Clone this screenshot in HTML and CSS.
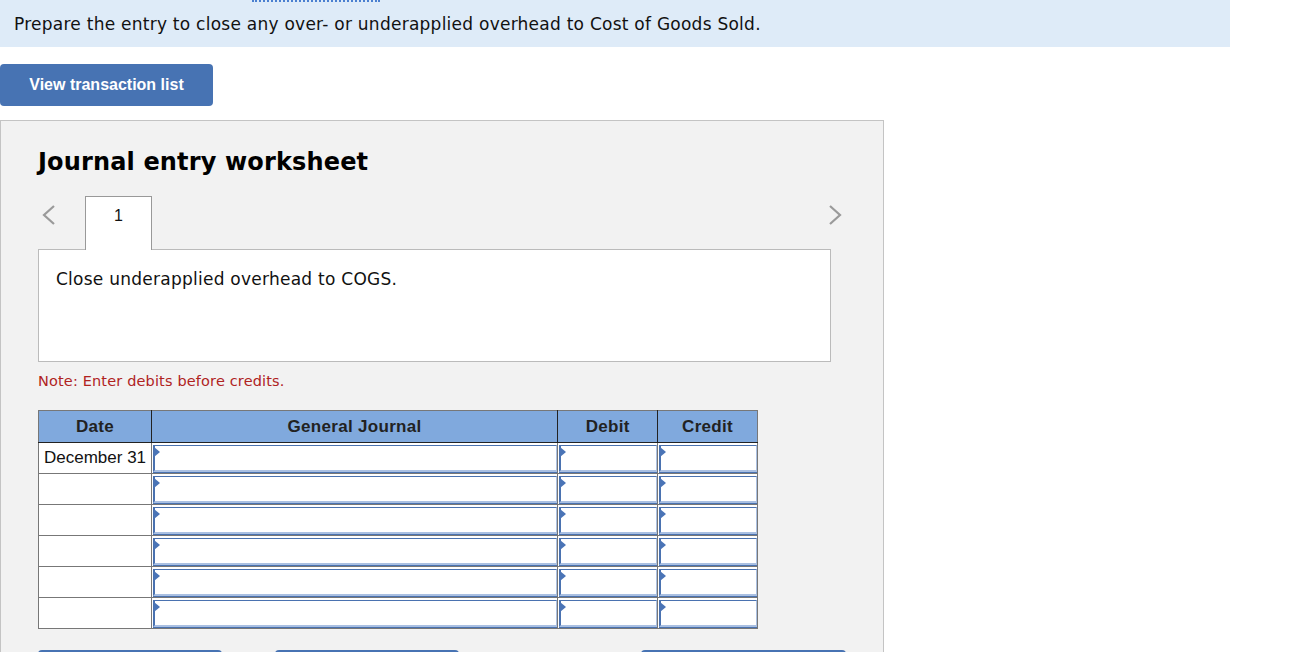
FILE: index.html
```html
<!DOCTYPE html>
<html lang="en">
<head>
    <meta charset="UTF-8">
    <title>Journal entry worksheet</title>
    <link rel="stylesheet" href="styles.css">
</head>
<body>
    <div class="prompt">
        <div class="prompt-mark"></div>
        <p>Prepare the entry to close any over- or underapplied overhead to Cost of Goods Sold.</p>
    </div>

    <button class="btn btn-list" type="button">View transaction list</button>

    <div class="worksheet">
        <h2>Journal entry worksheet</h2>

        <div class="tabs">
            <svg class="chevron" width="14" height="22" viewBox="0 0 14 22"><polyline points="12,2 2,11 12,20" fill="none" stroke="#9a9a9a" stroke-width="2.2"/></svg>
            <div class="tab">1</div>
            <div class="tabs-fill"></div>
            <svg class="chevron" width="14" height="22" viewBox="0 0 14 22"><polyline points="2,2 12,11 2,20" fill="none" stroke="#9a9a9a" stroke-width="2.2"/></svg>
        </div>

        <div class="task">Close underapplied overhead to COGS.</div>

        <p class="note">Note: Enter debits before credits.</p>

        <table class="journal">
            <thead>
                <tr>
                    <th class="col-date">Date</th>
                    <th class="col-account">General Journal</th>
                    <th class="col-amount">Debit</th>
                    <th class="col-amount">Credit</th>
                </tr>
            </thead>
            <tbody>
                <tr>
                    <td class="date">December 31</td>
                    <td class="entry"><div class="field"></div></td>
                    <td class="entry"><div class="field"></div></td>
                    <td class="entry"><div class="field"></div></td>
                </tr>
                <tr>
                    <td class="date"></td>
                    <td class="entry"><div class="field"></div></td>
                    <td class="entry"><div class="field"></div></td>
                    <td class="entry"><div class="field"></div></td>
                </tr>
                <tr>
                    <td class="date"></td>
                    <td class="entry"><div class="field"></div></td>
                    <td class="entry"><div class="field"></div></td>
                    <td class="entry"><div class="field"></div></td>
                </tr>
                <tr>
                    <td class="date"></td>
                    <td class="entry"><div class="field"></div></td>
                    <td class="entry"><div class="field"></div></td>
                    <td class="entry"><div class="field"></div></td>
                </tr>
                <tr>
                    <td class="date"></td>
                    <td class="entry"><div class="field"></div></td>
                    <td class="entry"><div class="field"></div></td>
                    <td class="entry"><div class="field"></div></td>
                </tr>
                <tr>
                    <td class="date"></td>
                    <td class="entry"><div class="field"></div></td>
                    <td class="entry"><div class="field"></div></td>
                    <td class="entry"><div class="field"></div></td>
                </tr>
            </tbody>
        </table>

        <div class="actions">
            <button class="btn btn-action" type="button">Record entry</button>
            <button class="btn btn-action" type="button">Clear entry</button>
            <div class="actions-fill"></div>
            <button class="btn btn-action btn-wide" type="button">View general journal</button>
        </div>
    </div>
</body>
</html>
```

FILE: styles.css
```css
body {
    margin: 0;
    font-family: "DejaVu Sans", Verdana, sans-serif;
    color: #111;
    background: #fff;
    overflow: hidden;
}

.prompt {
    width: 1230px;
    height: 47px;
    background: #deebf8;
}

.prompt-mark {
    margin-left: 252px;
    width: 128px;
    border-top: 2px dotted #4a7fd0;
}

.prompt p {
    margin: 0;
    padding: 11px 0 0 14px;
    font-size: 17px;
    letter-spacing: 0.25px;
    line-height: 22px;
}

.btn {
    border: none;
    background: #4773b3;
    color: #fff;
    font-family: "Liberation Sans", Arial, sans-serif;
    font-weight: bold;
    font-size: 16px;
    cursor: pointer;
}

.btn-list {
    display: block;
    margin-top: 17px;
    width: 213px;
    height: 42px;
    border-radius: 4px;
}

.worksheet {
    box-sizing: border-box;
    width: 884px;
    height: 600px;
    margin-top: 14px;
    padding: 0 0 0 37px;
    background: #f2f2f2;
    border: 1px solid #c4c4c4;
}

.worksheet h2 {
    margin: 0;
    padding-top: 26px;
    font-size: 24px;
    letter-spacing: 0.15px;
    line-height: 30px;
    font-weight: bold;
    color: #000;
}

.tabs {
    display: flex;
    align-items: center;
    width: 804px;
    margin-top: 18px;
    height: 54px;
}

.chevron {
    display: block;
    margin-top: -14px;
}

.chevron:first-child {
    margin-left: 4px;
}

.tab {
    position: relative;
    z-index: 1;
    box-sizing: border-box;
    align-self: flex-end;
    width: 67px;
    height: 54px;
    margin-left: 29px;
    margin-bottom: -1px;
    padding-top: 9px;
    background: #fff;
    border: 1px solid #999;
    border-bottom: none;
    text-align: center;
    font-family: "Liberation Sans", Arial, sans-serif;
    font-size: 16px;
    line-height: 20px;
}

.tabs-fill {
    flex: 1;
}

.task {
    box-sizing: border-box;
    width: 793px;
    height: 113px;
    padding: 18px 0 0 17px;
    background: #fff;
    border: 1px solid #bbb;
    font-size: 17px;
    letter-spacing: 0.25px;
    line-height: 22px;
}

.note {
    margin: 10px 0 0;
    font-size: 14.5px;
    letter-spacing: 0.15px;
    line-height: 18px;
    color: #b0231f;
}

.journal {
    margin-top: 20px;
    border-collapse: collapse;
    width: 720px;
    font-family: "Liberation Sans", Arial, sans-serif;
    font-size: 17px;
}

.journal th {
    height: 31px;
    padding: 0;
    background: #80a9dd;
    color: #222;
    font-weight: bold;
    letter-spacing: 0.3px;
    border: 1px solid #777;
    border-left-color: #222;
    border-right-color: #222;
    border-bottom-color: #222;
}

.journal th:first-child {
    border-left-color: #777;
}

.journal th:last-child {
    border-right-color: #777;
}

.col-date { width: 112px; }
.col-account { width: 406px; }
.col-amount { width: 99px; }

.journal td {
    height: 28px;
    padding: 0;
    background: #fff;
    border: 1px solid #777;
    line-height: 20px;
}

.journal td.date {
    padding-left: 5px;
    color: #111;
}

.journal td.entry {
    padding: 1px 0 1px 1px;
}

.field {
    position: relative;
    box-sizing: border-box;
    height: 27px;
    border-top: 1px solid #4a72b0;
    border-left: 2px solid #4a72b0;
    border-right: 1px solid #aac0e2;
    border-bottom: 2px solid #aac0e2;
    box-shadow: 0 1px 0 #4a72b0;
}

.field::before {
    content: '';
    position: absolute;
    top: 1px;
    left: -1px;
    border-top: 5px solid transparent;
    border-bottom: 5px solid transparent;
    border-left: 6px solid #4a74b6;
}

.actions {
    display: flex;
    width: 808px;
    margin-top: 21px;
}

.btn-action {
    width: 184px;
    height: 42px;
    margin-right: 53px;
    border-radius: 4px;
}

.btn-action:nth-child(2) {
    margin-right: 0;
}

.btn-wide {
    width: 205px;
    margin-right: 0;
}

.actions-fill {
    flex: 1;
}
```
